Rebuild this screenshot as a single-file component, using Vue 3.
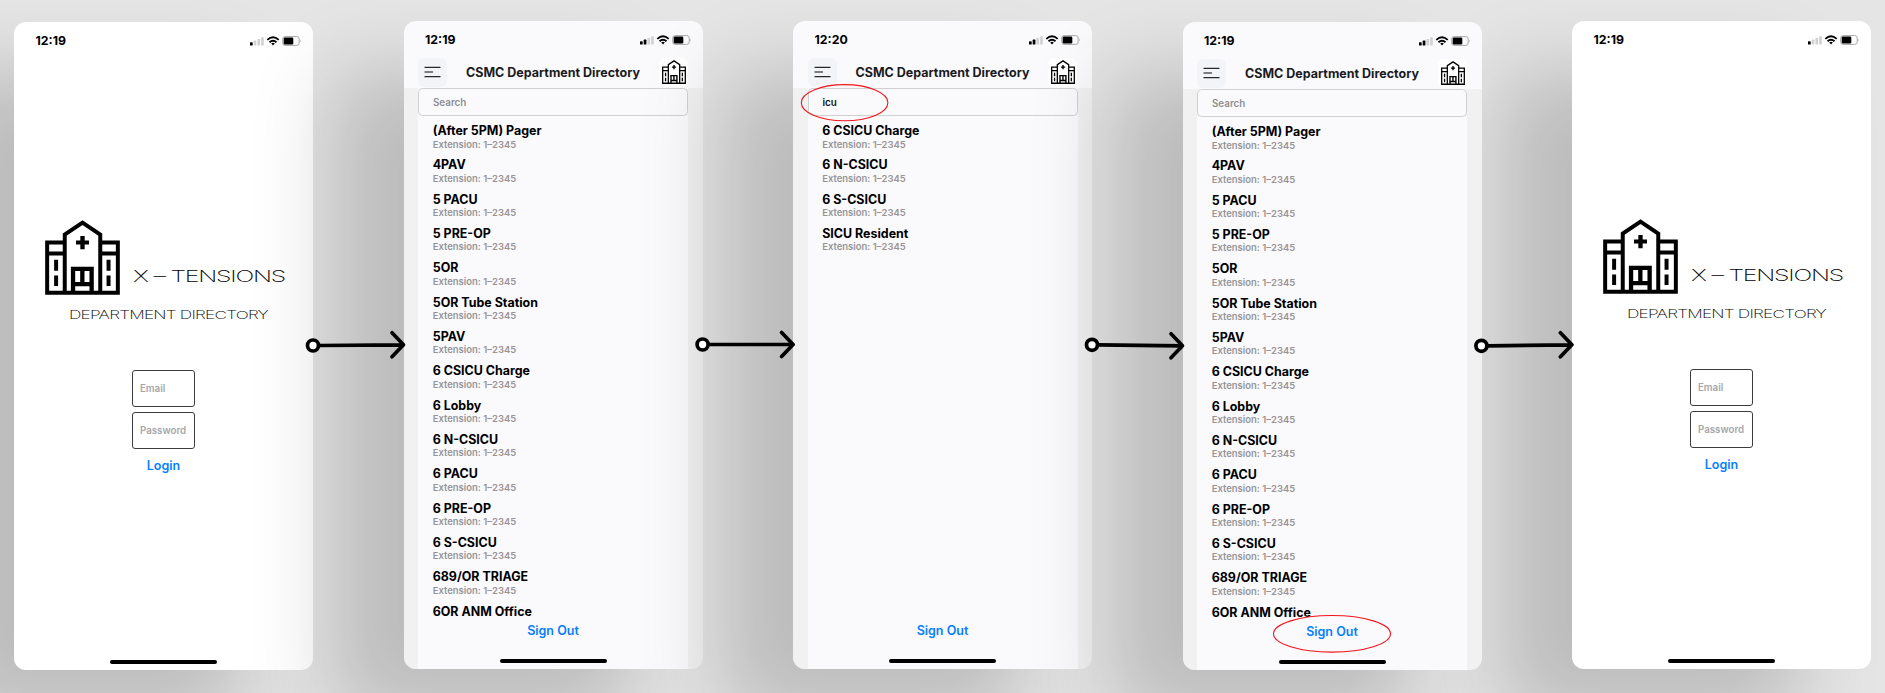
<script setup>
const all = [
  '(After 5PM) Pager', '4PAV', '5 PACU', '5 PRE-OP', '5OR', '5OR Tube Station', '5PAV',
  '6 CSICU Charge', '6 Lobby', '6 N-CSICU', '6 PACU', '6 PRE-OP', '6 S-CSICU',
  '689/OR TRIAGE', '6OR ANM Office',
]
const screens = [
  { kind: 'login', time: '12:19', bars: 1, low: true },
  { kind: 'list', time: '12:19', bars: 2, query: '', rows: all },
  { kind: 'list', time: '12:20', bars: 2, query: 'icu', rows: ['6 CSICU Charge', '6 N-CSICU', '6 S-CSICU', 'SICU Resident'] },
  { kind: 'list', time: '12:19', bars: 2, query: '', rows: all, low: true, front: true },
  { kind: 'login', time: '12:19', bars: 1 },
]
const arrows = [
  { x: 313, y: 345.5, e: 344.8 },
  { x: 702.6, y: 344.5, e: 344.5 },
  { x: 1092, y: 344.8, e: 345.8 },
  { x: 1481.4, y: 345.8, e: 344.8 },
]
</script>

<template>
  <div class="board">
    <svg width="0" height="0" class="defs">
      <symbol id="hospital" viewBox="0 0 225 226">
        <g fill="none" stroke="#000" stroke-width="12">
          <path d="M59 68H6V219H219V68H166" />
          <path d="M6 101H59M166 101H219" />
          <path d="M59 219V44L112.500 8L166 44V219" />
          <path d="M84 219V147H140V219M84 193H140M112 147V193" stroke-width="13" />
        </g>
        <path d="M106 48h13v14h13v12h-13v14h-13V74H93V62h13zM27 120h12v33H27zM27 167h12v32H27zM185 120h12v33h-12zM185 167h12v32h-12z" />
      </symbol>
    </svg>

    <section
      v-for="(s, i) in screens"
      :key="i"
      class="phone"
      :class="[s.kind, { low: s.low, front: s.front }]"
    >
      <div class="status">
        <span class="time">{{ s.time }}</span>
        <svg class="sys" width="52" height="12" viewBox="0 0 52 12">
          <rect
            v-for="n in 4"
            :key="n"
            :x="(n - 1) * 3.7"
            :y="9 - n * 1.7"
            width="2.7"
            :height="1.5 + n * 1.7"
            rx=".6"
            :fill="n <= s.bars ? '#000' : '#d2d2d4'"
          />
          <g fill="none" stroke="#000" stroke-width="1.800">
            <path d="M17.300 4.800Q23 -.4 28.700 4.800" />
            <path d="M19.500 7.200Q23 4.200 26.500 7.200" />
          </g>
          <path d="M21.200 8.500Q23 7.100 24.800 8.500L23 10.500z" />
          <rect x="32.700" y="1.600" width="16.500" height="8.800" rx="2.400" fill="none" stroke="#a8a8aa" />
          <rect x="33.700" y="2.600" width="9.600" height="6.800" rx="1.200" />
          <path d="M50.400 4.500Q51.800 6 50.400 7.500z" fill="#a8a8aa" />
        </svg>
      </div>

      <template v-if="s.kind === 'login'">
        <div class="brand">
          <svg class="logo"><use href="#hospital" /></svg>
          <svg class="word" width="160" height="26">
            <text x="2" y="18" font-size="16.500" textLength="152" lengthAdjust="spacingAndGlyphs">X – TENSIONS</text>
          </svg>
        </div>
        <svg class="sub" width="206" height="14">
          <text x="2" y="9.500" font-size="11" textLength="199" lengthAdjust="spacingAndGlyphs">DEPARTMENT DIRECTORY</text>
        </svg>
        <div class="form">
          <div class="field">Email</div>
          <div class="field">Password</div>
          <div class="link">Login</div>
        </div>
      </template>

      <template v-else>
        <header class="bar">
          <div class="tile menu">
            <svg width="17" height="12" viewBox="0 0 17 12" fill="none" stroke="#26282c" stroke-width="1.300" stroke-linecap="round">
              <path d="M1 1.300H16M1 10.700H16" />
              <path d="M1 6H8.500" stroke="#555" />
            </svg>
          </div>
          <h1>CSMC Department Directory</h1>
          <div class="tile home"><svg width="24" height="24"><use href="#hospital" /></svg></div>
        </header>
        <main class="panel">
          <div class="search" :class="{ typed: s.query }">{{ s.query || 'Search' }}</div>
          <ul>
            <li v-for="r in s.rows" :key="r">
              <b>{{ r }}</b>
              <p><span>Extension:</span><i>1–2345</i></p>
            </li>
          </ul>
          <div class="signout link">Sign Out</div>
        </main>
      </template>
      <div class="indicator"></div>
    </section>

    <svg class="overlay" width="1885" height="693" viewBox="0 0 1885 693" fill="none">
      <g v-for="a in arrows" :key="a.x" stroke="#000" stroke-width="3.700" stroke-linecap="round" stroke-linejoin="round">
        <path :d="`M${a.x + 6} ${a.y}L${a.x + 90.5} ${a.e}M${a.x + 79} ${a.e - 12}L${a.x + 90.5} ${a.e}L${a.x + 79} ${a.e + 12}`" />
        <circle :cx="a.x" :cy="a.y" r="5.500" fill="#fff" />
      </g>
      <ellipse cx="844.600" cy="102.700" rx="43.300" ry="18.100" stroke="#f5141c" stroke-width="1.100" />
      <ellipse cx="1332" cy="633.800" rx="58.500" ry="18.300" stroke="#f5141c" stroke-width="1.100" />
    </svg>
  </div>
</template>

<style>
body { margin: 0; overflow: hidden; }
</style>

<style scoped>
.board {
  position: relative;
  box-sizing: border-box;
  width: 1885px;
  height: 693px;
  padding: 21px 14px 0;
  display: flex;
  justify-content: space-between;
  align-items: flex-start;
  overflow: hidden;
  background: #e5e5e5;
  font-family: Inter, "Liberation Sans", sans-serif;
  color: #000;
}
.defs { position: absolute; }
.phone {
  position: relative;
  width: 299px;
  height: 647.5px;
  flex: none;
  display: flex;
  flex-direction: column;
  border-radius: 12px;
  background: #fff;
  box-shadow: -72px 50px 82px rgba(0, 0, 0, .18);
}
.phone.low { margin-top: 1px; }
.phone.front { z-index: 1; }
.phone.list { background: linear-gradient(#fafafd 67px, #f1f1f1 67px); }
.status {
  height: 37px;
  flex: none;
  display: flex;
  justify-content: space-between;
  align-items: center;
  padding: 0 11px 0 21.5px;
}
.time { font-size: 12.300px; font-weight: 700; }
.brand { display: flex; height: 75px; margin: 161px 0 0 31px; }
.logo { width: 75px; height: 75px; flex: none; }
.word { margin: 43.500px 0 0 10.500px; flex: none; overflow: visible; }
.word text, .sub text { font-weight: 200; fill: #000; }
.word text { letter-spacing: -.8px; }
.sub text { letter-spacing: -.5px; }
.sub { margin: 14px 0 0 53px; flex: none; overflow: visible; }
.form { display: flex; flex-direction: column; align-items: center; gap: 5px; margin: 46.500px 0 0; }
.field {
  box-sizing: border-box;
  width: 63.500px;
  height: 37px;
  padding-left: 7.200px;
  border: 1px solid #3c3c3c;
  border-radius: 3px;
  font-size: 9.750px;
  font-weight: 600;
  line-height: 35px;
  color: #a6a6a8;
}
.link { font-size: 12.500px; font-weight: 600; line-height: 16px; color: #087fff; text-align: center; }
.form .link { margin-top: 4px; }
.bar {
  height: 30px;
  flex: none;
  display: flex;
  justify-content: space-between;
  align-items: flex-start;
  padding: 0 14.500px;
}
.tile { width: 29px; height: 29px; border-radius: 6px; display: flex; align-items: center; justify-content: center; }
.menu { background: #f2f4f8; }
.menu svg { margin-bottom: 1px; }
.home { background: #fff; }
.home svg { margin: 0 0 2px 1px; }
h1 { margin: 0; font-size: 12.500px; line-height: 29px; font-weight: 700; color: #1b1b1e; white-space: nowrap; }
.panel {
  position: relative;
  flex: 1;
  min-height: 0;
  margin: 0 14.500px;
  background: #fafafd;
}
.search {
  box-sizing: border-box;
  height: 28px;
  padding-left: 14px;
  border: 1px solid #d0d0d3;
  border-radius: 4.500px;
  font-size: 9.800px;
  font-weight: 600;
  line-height: 27px;
  color: #8e8e91;
}
.search.typed { color: #111; }
ul { box-sizing: border-box; list-style: none; margin: 0; padding: 8px 0 0 14.700px; height: 506.500px; }
li { height: 34.330px; }
li b { display: block; font-size: 12.450px; line-height: 14.500px; font-weight: 700; white-space: nowrap; }
li:last-child:nth-child(15) p { display: none; }
li p { margin: 0; display: flex; gap: 2.500px; font-size: 9.480px; font-weight: 600; line-height: 12.500px; color: #959597; }
li i { font-style: normal; color: #9c9393; }
.signout { margin-top: .5px; }
.indicator {
  width: 107px;
  height: 4px;
  margin: auto auto 6px;
  border-radius: 2px;
  background: #000;
}
.list .indicator { position: absolute; left: 96px; bottom: 6px; margin: 0; }
.overlay { position: absolute; left: 0; top: 0; z-index: 2; }
</style>
